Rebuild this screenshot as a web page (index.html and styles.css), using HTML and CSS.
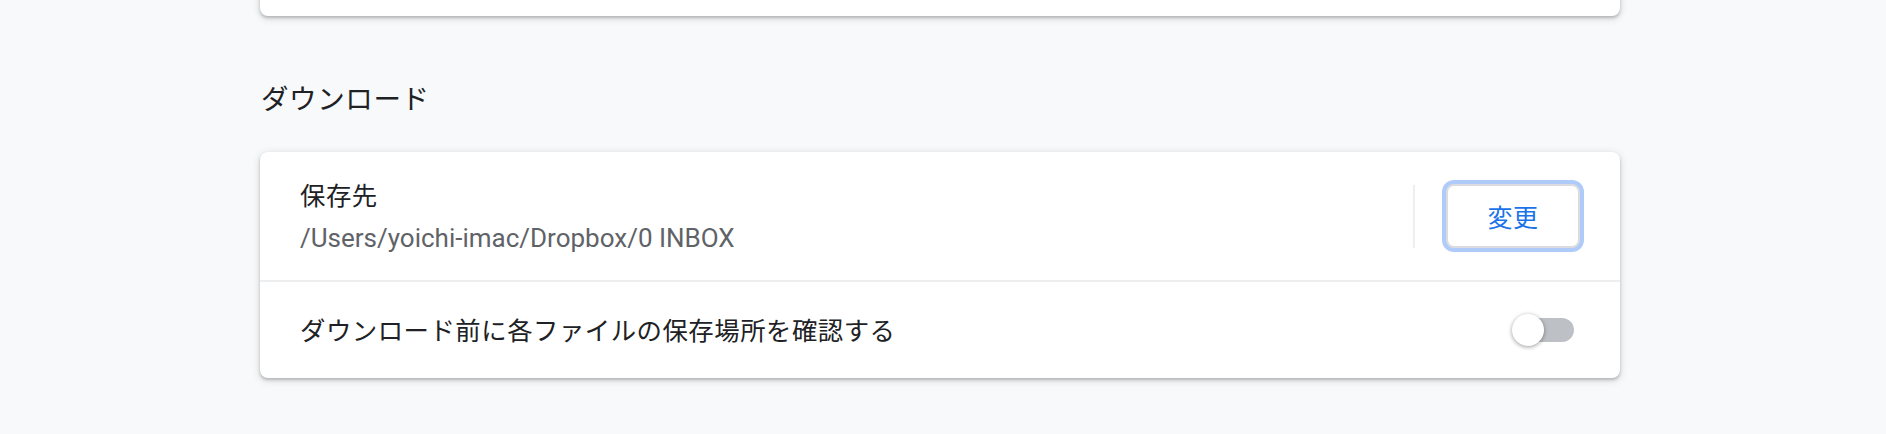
FILE: index.html
```html
<!DOCTYPE html>
<html lang="ja">
<head>
<meta charset="utf-8">
<title>ダウンロード</title>
<link rel="stylesheet" href="styles.css">
</head>
<body>
<main class="page">
  <div class="card card-prev"></div>

  <h2 class="section-title">ダウンロード</h2>

  <section class="card">
    <div class="row row-location">
      <div class="row-text">
        <div class="label">保存先</div>
        <div class="sublabel">/Users/yoichi-imac/Dropbox/0 INBOX</div>
      </div>
      <div class="separator"></div>
      <button class="btn" type="button">変更</button>
    </div>
    <div class="row row-toggle">
      <div class="label">ダウンロード前に各ファイルの保存場所を確認する</div>
      <div class="toggle">
        <span class="toggle-bar"></span>
        <span class="toggle-knob"></span>
      </div>
    </div>
  </section>
</main>
</body>
</html>
```

FILE: styles.css
```css
html, body {
  margin: 0;
  padding: 0;
  background: #f8f9fa;
}

body {
  font-family: "Noto Sans CJK JP", "Noto Sans", sans-serif;
  color: #202124;
  height: 434px;
  overflow: hidden;
}

.page {
  width: 1360px;
  margin-left: 260px;
  display: flex;
  flex-direction: column;
}

.card {
  background: #ffffff;
  border-radius: 8px;
  box-shadow: 0 2px 3px rgba(60, 64, 67, 0.28), 0 2px 6px 2px rgba(60, 64, 67, 0.12);
}

.card-prev {
  height: 116px;
  margin-top: -100px;
}

.section-title {
  margin: 60px 0 34px 1px;
  font-size: 27.5px;
  line-height: 42px;
  font-weight: 400;
  letter-spacing: 0.6px;
  color: #202124;
}

.row {
  display: flex;
  align-items: center;
  padding: 0 40px;
  box-sizing: border-box;
}

.row-location {
  height: 128px;
}

.row-toggle {
  height: 98px;
  border-top: 2px solid #eceef0;
  padding-right: 46px;
}

.row-text {
  flex: 1;
  display: flex;
  flex-direction: column;
}

.label {
  flex: 1;
  font-size: 25.4px;
  line-height: 44px;
  letter-spacing: 0.5px;
  color: #202124;
}

.row-toggle .label {
  margin-top: -3px;
}

.sublabel {
  font-family: Roboto, "Noto Sans", sans-serif;
  font-size: 26px;
  line-height: 44px;
  color: #5f6368;
}

.separator {
  width: 2px;
  height: 63px;
  background: #eceef0;
  margin-right: 31px;
}

.btn {
  width: 134px;
  height: 64px;
  box-sizing: border-box;
  border: 2px solid #dadce0;
  border-radius: 8px;
  background: #ffffff;
  box-shadow: 0 0 0 4px #aecbfa;
  color: #1a73e8;
  font-family: "Noto Sans CJK JP", sans-serif;
  font-size: 25px;
  font-weight: 400;
  letter-spacing: 0.5px;
  padding: 0;
}

.toggle {
  position: relative;
  width: 62px;
  height: 32px;
}

.toggle-bar {
  position: absolute;
  right: 0;
  top: 4px;
  width: 58px;
  height: 24px;
  border-radius: 12px;
  background: #bdc1c6;
}

.toggle-knob {
  position: absolute;
  left: 0;
  top: 0;
  width: 32px;
  height: 32px;
  border-radius: 50%;
  background: #ffffff;
  box-shadow: 0 1px 4px rgba(0, 0, 0, 0.4);
}
```
